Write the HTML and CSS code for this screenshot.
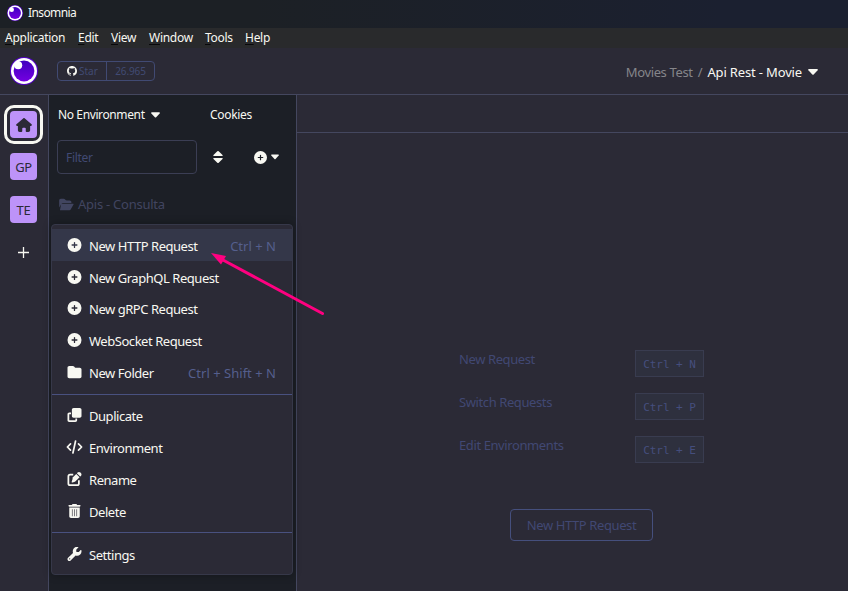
FILE: index.html
```html
<!DOCTYPE html>
<html lang="en">
<head>
<meta charset="utf-8">
<title>Insomnia</title>
<link rel="stylesheet" href="styles.css">
</head>
<body>
<svg class="defs" aria-hidden="true">
  <defs>
    <linearGradient id="orb" x1="0" y1="0" x2="0" y2="1"><stop offset="0" stop-color="#4000bf"/><stop offset="1" stop-color="#7400e1"/></linearGradient>
    <symbol id="logo" viewBox="0 0 28 28"><circle cx="14" cy="14" r="14" fill="#5300c8"/><circle cx="14" cy="14" r="13" fill="#fff"/><circle cx="14" cy="14" r="10.4" fill="url(#orb)"/><circle cx="8.2" cy="8.2" r="4" fill="#fff"/></symbol>
    <symbol id="plus" viewBox="0 0 512 512"><path fill-rule="evenodd" d="M256 512A256 256 0 1 0 256 0a256 256 0 1 0 0 512zM232 344V280H168c-13 0-24-11-24-24s11-24 24-24h64V168c0-13 11-24 24-24s24 11 24 24v64h64c13 0 24 11 24 24s-11 24-24 24H280v64c0 13-11 24-24 24s-24-11-24-24z"/></symbol>
    <symbol id="folder" viewBox="0 0 512 512"><path d="M64 480H448c35 0 64-29 64-64V160c0-35-29-64-64-64H288c-10 0-20-5-26-13L243 57c-12-16-31-25-51-25H64C29 32 0 61 0 96V416c0 35 29 64 64 64z"/></symbol>
    <symbol id="open" viewBox="0 0 576 512"><path d="M88 224h456c18 0 30 20 20 36L452 452c-10 17-28 28-48 28H30L88 190V224zM0 448V96c0-35 29-64 64-64h117c17 0 33 7 45 19l26 26c12 12 28 19 45 19h119c35 0 64 29 64 64v32H144c-23 0-44 12-55 32L0 376z"/></symbol>
    <symbol id="clone" viewBox="0 0 512 512"><path d="M224 0h224c35 0 64 29 64 64v224c0 35-29 64-64 64H224c-35 0-64-29-64-64V64c0-35 29-64 64-64zM64 160h64v64H64v224h224v-64h64v64c0 35-29 64-64 64H64c-35 0-64-29-64-64V224c0-35 29-64 64-64z"/></symbol>
    <symbol id="code" viewBox="0 0 640 512"><path d="M360 32L260 480M170 140L52 256l118 116M470 140l118 116-118 116" fill="none" stroke="currentColor" stroke-width="64" stroke-linecap="round" stroke-linejoin="round"/></symbol>
    <symbol id="edit" viewBox="0 0 512 512"><path d="M472 22l18 18c29 29 29 74 0 103l-26 26L343 48l26-26c29-29 74-29 103 0zM172 219L320 71l121 121-148 148c-6 6-14 11-23 14l-88 29c-18 6-35-11-29-29l29-88c2-9 7-17 13-23z"/><path d="M210 96H96c-35 0-64 29-64 64v256c0 35 29 64 64 64h256c35 0 64-29 64-64V302" fill="none" stroke="currentColor" stroke-width="64"/></symbol>
    <symbol id="trash" viewBox="0 0 448 512"><path fill-rule="evenodd" d="M135 18c6-11 17-18 29-18h120c12 0 23 7 29 18l7 14h96c18 0 32 14 32 32s-14 32-32 32H32C14 96 0 82 0 64s14-32 32-32h96zM32 128h384v320c0 35-29 64-64 64H96c-35 0-64-29-64-64zM130 192v256h22V192zM213 192v256h22V192zM296 192v256h22V192z"/></symbol>
    <symbol id="wrench" viewBox="0 0 512 512"><path fill-rule="evenodd" d="M352 320c88 0 160-72 160-160 0-15-2-30-6-44-3-11-17-14-25-6l-68 69c-3 3-7 5-11 5h-66c-9 0-16-7-16-16v-66c0-4 2-8 5-11l69-69c8-8 5-22-6-25-14-3-29-5-44-5-88 0-152 80-152 168 0 19 3 38 10 55L20 397c-27 27-27 68 0 95s68 27 95 0l182-182c17 6 36 10 55 10zM80 408a24 24 0 1 1 0 48 24 24 0 1 1 0-48z"/></symbol>
    <symbol id="home" viewBox="0 0 576 512"><path d="M309 8c-12-11-30-11-42 0L11 232c-23 20-8 56 21 56h32l1 160c0 35 28 64 63 64h64c18 0 32-14 32-32v-96c0-18 14-32 32-32h64c18 0 32 14 32 32v96c0 18 14 32 32 32h64c35 0 64-29 64-64V288h32c30 0 43-36 21-56z"/></symbol>
    <symbol id="github" viewBox="0 0 16 16"><path d="M8 0C3.58 0 0 3.58 0 8c0 3.54 2.29 6.53 5.47 7.59.4.07.55-.17.55-.38 0-.19-.01-.82-.01-1.49-2.01.37-2.53-.49-2.69-.94-.09-.23-.48-.94-.82-1.13-.28-.15-.68-.52-.01-.53.63-.01 1.08.58 1.23.82.72 1.21 1.87.87 2.33.66.07-.52.28-.87.51-1.07-1.78-.2-3.64-.89-3.64-3.95 0-.87.31-1.59.82-2.15-.08-.2-.36-1.02.08-2.12 0 0 .67-.21 2.2.82.64-.18 1.32-.27 2-.27s1.36.09 2 .27c1.53-1.04 2.2-.82 2.2-.82.44 1.1.16 1.92.08 2.12.51.56.82 1.27.82 2.15 0 3.07-1.87 3.75-3.65 3.95.29.25.54.73.54 1.48 0 1.07-.01 1.93-.01 2.2 0 .21.15.46.55.38A8.01 8.01 0 0 0 16 8c0-4.42-3.58-8-8-8z"/></symbol>
    <symbol id="caret" viewBox="0 0 10 6"><path d="M1 0h8q1.4.2.6 1.2L5.7 5.4q-.7.7-1.4 0L.4 1.2Q-.4.2 1 0z"/></symbol>
    <symbol id="sort" viewBox="0 0 10 12"><path d="M1 5h8q1.3-.2.5-1.1L5.7.3Q5-.3 4.300.3L.5 3.900Q-.3 4.800 1 5zM1 7h8q1.300.2.5 1.100L5.700 11.700q-.7.600-1.400 0L.5 8.100Q-.3 7.200 1 7z"/></symbol>
  </defs>
</svg>
<div class="window">
  <div class="titlebar"><svg class="mark"><use href="#logo"/></svg><span>Insomnia</span></div>
  <nav class="menubar">
    <span class="m-app"><u>A</u>pplication</span><span class="m-edit"><u>E</u>dit</span><span class="m-view"><u>V</u>iew</span><span class="m-window"><u>W</u>indow</span><span class="m-tools"><u>T</u>ools</span><span><u>H</u>elp</span>
  </nav>
  <header class="header">
    <svg class="brand"><use href="#logo"/></svg>
    <div class="github"><span class="star"><svg><use href="#github"/></svg>Star</span><span class="count">26.965</span></div>
    <div class="crumbs"><span class="project">Movies Test</span><span class="slash">/</span><span class="doc">Api Rest - Movie</span><svg class="caret"><use href="#caret"/></svg></div>
  </header>
  <div class="body">
    <aside class="rail">
      <div class="focus"><div class="tile"><svg><use href="#home"/></svg></div></div>
      <div class="tile">GP</div>
      <div class="tile">TE</div>
      <svg class="add" viewBox="0 0 11 11"><path d="M5.500 0v11M0 5.500h11" stroke="currentColor" stroke-width="1.300"/></svg>
    </aside>
    <section class="sidebar">
      <div class="envbar"><span class="env">No Environment</span><svg class="caret"><use href="#caret"/></svg><span class="cookies">Cookies</span></div>
      <div class="filterbar"><div class="filter">Filter</div><svg class="sort"><use href="#sort"/></svg><svg class="create"><use href="#plus"/></svg><svg class="caret"><use href="#caret"/></svg></div>
      <div class="group"><svg><use href="#open"/></svg><span>Apis - Consulta</span></div>
      <div class="menu">
        <div class="item active"><svg><use href="#plus"/></svg><span class="label">New HTTP Request</span><kbd>Ctrl + N</kbd></div>
        <div class="item"><svg><use href="#plus"/></svg><span class="label">New GraphQL Request</span></div>
        <div class="item raised"><svg><use href="#plus"/></svg><span class="label">New gRPC Request</span></div>
        <div class="item raised"><svg><use href="#plus"/></svg><span class="label">WebSocket Request</span></div>
        <div class="item raised"><svg><use href="#folder"/></svg><span class="label">New Folder</span><kbd>Ctrl + Shift + N</kbd></div>
        <hr>
        <div class="item raised"><svg><use href="#clone"/></svg><span class="label">Duplicate</span></div>
        <div class="item raised"><svg class="wide"><use href="#code"/></svg><span class="label">Environment</span></div>
        <div class="item raised"><svg><use href="#edit"/></svg><span class="label">Rename</span></div>
        <div class="item raised"><svg><use href="#trash"/></svg><span class="label">Delete</span></div>
        <hr class="last">
        <div class="item raised"><svg><use href="#wrench"/></svg><span class="label">Settings</span></div>
      </div>
    </section>
    <main class="main">
      <div class="toolbar"></div>
      <div class="empty">
        <div class="row"><span>New Request</span><kbd>Ctrl + N</kbd></div>
        <div class="row"><span>Switch Requests</span><kbd>Ctrl + P</kbd></div>
        <div class="row"><span>Edit Environments</span><kbd>Ctrl + E</kbd></div>
        <button>New HTTP Request</button>
      </div>
    </main>
  </div>
  <svg class="arrow" viewBox="0 0 114 64"><path d="M12 8L111.500 61.500" stroke="#ff0080" stroke-width="3" stroke-linecap="round"/><path d="M0 1L15 4L10 12.500z" fill="#ff0080"/></svg>
</div>
</body>
</html>
```
FILE: styles.css
```css
* { box-sizing: border-box; }
body { margin: 0; background: #2b2a36; font: 13px/20px "Noto Sans", sans-serif; letter-spacing: -0.32px; color: #f8f8f2; }
svg { display: block; flex: none; fill: currentColor; }
span { white-space: nowrap; }
.defs { position: absolute; width: 0; height: 0; }
.window { position: relative; width: 848px; height: 591px; overflow: hidden; display: flex; flex-direction: column; }
.titlebar { height: 28px; flex: none; background: linear-gradient(90deg, #1c2025 30%, #1b2030 85%); display: flex; align-items: center; gap: 5px; padding: 0 0 3px 7px; font-size: 12px; letter-spacing: -0.6px; }
.mark { width: 16px; height: 16px; }
.menubar { height: 20px; flex: none; background: #292a2c; display: flex; align-items: center; padding-left: 5px; font-size: 12px; letter-spacing: -0.27px; }
.menubar span { width: 60px; }
.menubar .m-app { width: 73px; }
.menubar .m-edit { width: 33px; }
.menubar .m-view { width: 38px; }
.menubar .m-window { width: 56px; }
.menubar .m-tools { width: 40px; }
.menubar u { text-decoration-color: #08080a; text-underline-offset: 2px; text-decoration-thickness: 1px; text-decoration-skip-ink: none; }
.header { height: 47px; flex: none; border-bottom: 1px solid #44475f; display: flex; align-items: center; padding: 0 30px 0 10px; }
.brand { width: 28px; height: 28px; }
.github { display: flex; width: 98px; height: 20px; margin-left: 19px; border: 1px solid #414a73; border-radius: 4px; color: #414a73; font-size: 10px; line-height: 19px; letter-spacing: 0; }
.star { width: 49px; border-right: 1px solid #414a73; display: flex; align-items: center; gap: 2px; padding-left: 9px; }
.star svg { width: 10px; height: 10px; color: #f8f8f2; }
.count { flex: 1; text-align: center; letter-spacing: -.1px; }
.crumbs { margin-left: auto; display: flex; align-items: center; padding-top: 1px; letter-spacing: -.15px; }
.project { color: #85858a; letter-spacing: -.35px; }
.slash { color: #85858a; margin: 0 5px; }
.caret { width: 10px; height: 6px; }
.crumbs .caret { margin-left: 6px; }
.body { flex: 1; display: flex; min-height: 0; }
.rail { width: 49px; border-right: 1px solid #44475f; display: flex; flex-direction: column; align-items: center; padding-top: 10px; padding-right: 1px; }
.focus { width: 39px; height: 39px; border: 3px solid #f8f8f2; border-radius: 10px; display: grid; place-items: center; margin-bottom: 9px; flex: none; }
.tile { width: 27px; height: 27px; flex: none; border-radius: 4px; background: #bd93f9; color: #2b2a36; display: grid; place-items: center; padding-top: 1px; }
.tile svg { width: 16px; height: 14px; }
.focus .tile { padding: 0; }
.tile + .tile { margin-top: 16px; }
.add { width: 11px; height: 11px; margin-top: 24px; }
.sidebar { width: 248px; flex: none; background: #1c1f26; border-right: 1px solid #44475f; }
.envbar { height: 40px; display: flex; align-items: center; padding-left: 9px; font-size: 12px; letter-spacing: -.3px; }
.env { width: 87px; letter-spacing: -.38px; }
.envbar .caret { margin-left: 6px; width: 9px; }
.cookies { margin-left: 50px; }
.filterbar { height: 34px; margin-top: 5px; padding-left: 8px; display: flex; align-items: center; }
.filter { width: 140px; height: 34px; border: 1px solid #3b3e54; border-radius: 4px; padding: 7px 8px; line-height: 19px; color: #414a73; font-size: 12px; letter-spacing: -.3px; }
.sort { width: 10px; height: 12px; margin-left: 16px; }
.create { width: 13px; height: 13px; margin: 0 4px 0 31px; }
.filterbar .caret { width: 8px; }
.group { display: flex; align-items: center; gap: 4px; padding-left: 10px; margin-top: 20px; color: #414560; letter-spacing: -.25px; }
.group svg { width: 15px; height: 13px; }
.menu { width: 242px; height: 351px; margin: 10px 0 0 2px; padding-top: 4px; border: 1px solid #363849; border-radius: 4px; background: #2b2a36; box-shadow: 0 0 8px rgba(0,0,0,.3); }
.item { height: 32px; display: flex; align-items: center; padding: 1px 16px 0 15px; }
.raised { padding-top: 0; padding-bottom: 1px; }
.item svg { width: 15px; height: 14px; margin-bottom: 2px; }
.item .wide { width: 17px; margin-left: -1px; margin-right: -1px; }
.label { margin-left: 7px; letter-spacing: -.46px; }
.active { background: #343749; }
.menu kbd { font: inherit; margin-left: auto; color: #555f8d; letter-spacing: .02px; }
hr { height: 1px; border: 0; margin: 5px 0; background: #495180; }
hr.last { margin: 4px 0 6px; }
.main { flex: 1; }
.toolbar { height: 38px; border-bottom: 1px solid #44475f; }
.empty { width: 245px; margin: 217px 0 0 162px; color: #414873; letter-spacing: -.4px; }
.row { height: 27px; display: flex; justify-content: space-between; margin-bottom: 16px; }
.row span { margin-top: -1px; }
.row kbd { width: 69px; height: 27px; border: 1px solid #393c50; background: #2e303e; font: 11px/27px "DejaVu Sans Mono", monospace; letter-spacing: -.05px; text-align: center; color: #454e7d; }
button { display: block; width: 143px; height: 32px; margin: 46px 0 0 51px; padding: 0; background: none; border: 1px solid #454f7d; border-radius: 4px; font: inherit; letter-spacing: inherit; color: inherit; }
.arrow { position: absolute; left: 211px; top: 252px; width: 114px; height: 64px; fill: none; }
```
